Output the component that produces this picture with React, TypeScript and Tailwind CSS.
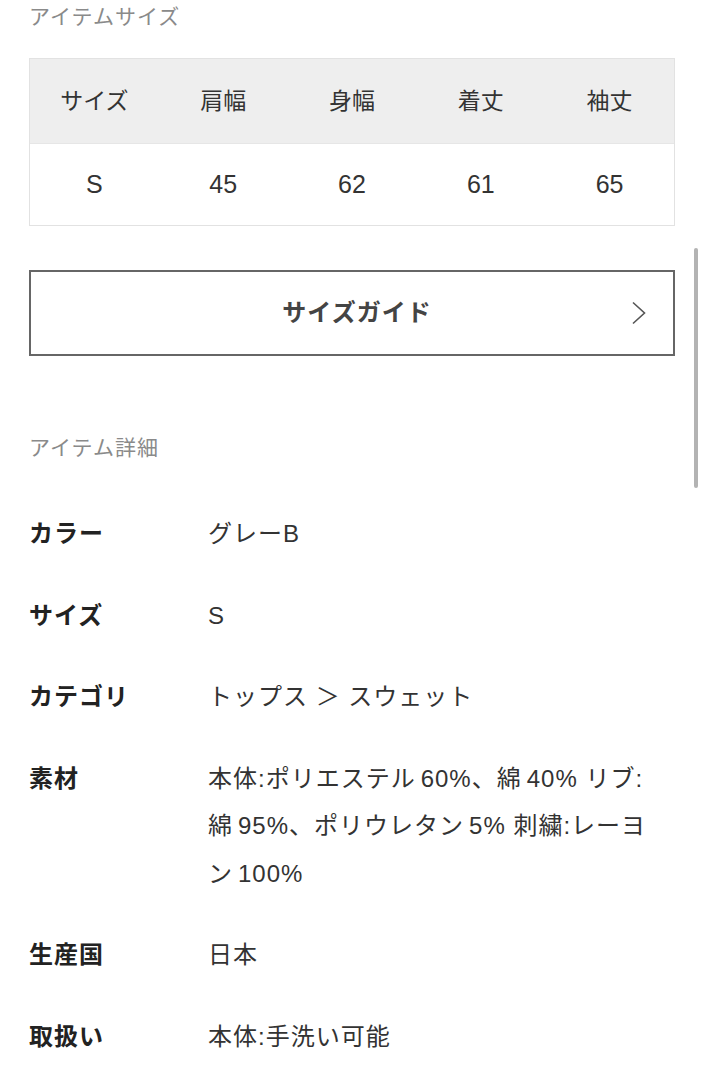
import React from "react";

const FONT = '"Liberation Sans", "Noto Sans CJK JP", sans-serif';

const headers = ["サイズ", "肩幅", "身幅", "着丈", "袖丈"];
const values = ["S", "45", "62", "61", "65"];

const details: { label: string; value: string }[] = [
  { label: "カラー", value: "グレーB" },
  { label: "サイズ", value: "S" },
  { label: "カテゴリ", value: "トップス ＞ スウェット" },
  {
    label: "素材",
    value: "本体:ポリエステル60%、綿40% リブ:綿95%、ポリウレタン5% 刺繍:レーヨン100%",
  },
  { label: "生産国", value: "日本" },
  { label: "取扱い", value: "本体:手洗い可能" },
];

function Spaced({ text }: { text: string }) {
  const parts = text.split(/(\d+%?)/).filter((p) => p.length > 0);
  return (
    <>
      {parts.map((p, i) => {
        const isNum = /^\d/.test(p);
        const prev = i > 0 ? parts[i - 1] : "";
        const needGap = isNum && prev.length > 0 && !/\s$/.test(prev);
        return isNum ? (
          <span key={i} className={needGap ? "ml-[5px]" : ""}>
            {p}
          </span>
        ) : (
          <React.Fragment key={i}>{p}</React.Fragment>
        );
      })}
    </>
  );
}

export default function App() {
  return (
    <div
      className="relative w-[705px] h-[1080px] overflow-hidden bg-white"
      style={{ fontFamily: FONT }}
    >
      <div className="absolute right-[7px] top-[248px] w-[4px] h-[240px] rounded-full bg-[#b3b3b3]" />
      <div className="pl-[29px] pr-[30px] pt-[2px]">
        <div className="text-[21px] leading-[30px] tracking-[1px] text-[#8a8a8a]">アイテムサイズ</div>

        <div className="mt-[26px] border border-[#e2e2e2]">
          <div className="grid grid-cols-5 h-[84px] bg-[#eeeeee] items-center text-[23px] text-[#333]">
            {headers.map((h) => (
              <div key={h} className="text-center">
                {h}
              </div>
            ))}
          </div>
          <div className="grid grid-cols-5 h-[82px] bg-white items-center text-[25px] text-[#333] border-t border-[#e6e6e6]">
            {values.map((v, i) => (
              <div key={i} className="text-center">
                {v}
              </div>
            ))}
          </div>
        </div>

        <div className="mt-[44px] h-[86px] border-2 border-[#666] flex items-center justify-center relative">
          <span className="pl-[10px] text-[24px] font-bold text-[#444] tracking-[1px]">サイズガイド</span>
          <svg
            className="absolute right-[27px] top-1/2 -translate-y-1/2"
            width="14"
            height="24"
            viewBox="0 0 14 24"
            fill="none"
          >
            <path d="M1 1.5 L12.5 12 L1 22.5" stroke="#555" strokeWidth="1.6" />
          </svg>
        </div>

        <div className="mt-[77px] text-[21px] leading-[30px] tracking-[1px] text-[#8a8a8a]">アイテム詳細</div>

        <div className="mt-[47px] flex flex-col gap-[34px]">
          {details.map((d) => (
            <div key={d.label} className="flex">
              <div className="w-[179px] shrink-0 text-[24px] leading-[47.5px] font-bold tracking-[1px] text-[#222]">
                {d.label}
              </div>
              <div className="w-[452px] text-[24px] leading-[47.5px] tracking-[1px] text-[#333]">
                <Spaced text={d.value} />
              </div>
            </div>
          ))}
        </div>
      </div>
    </div>
  );
}
